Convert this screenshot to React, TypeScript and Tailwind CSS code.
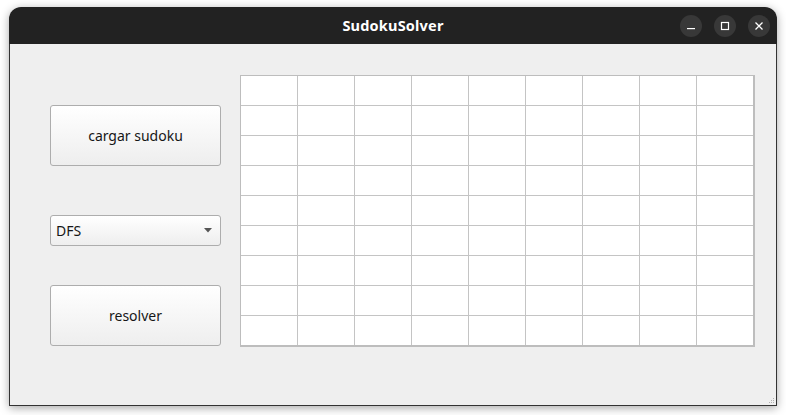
import React from 'react';

const rows = Array.from({ length: 9 });
const cols = Array.from({ length: 9 });

const TitleButton: React.FC<{ children: React.ReactNode }> = ({ children }) => (
  <div className="w-[22px] h-[22px] rounded-full bg-[#383838] flex items-center justify-center text-white">
    {children}
  </div>
);

const App: React.FC = () => {
  return (
    <div className="w-[786px] h-[415px] bg-white pl-[9px] pt-[7px] font-['Noto_Sans',sans-serif]">
      <div className="w-[768px] h-[399px] flex flex-col rounded-t-[12px] shadow-[0_2px_10px_rgba(0,0,0,0.35)]">
        <div className="h-[37px] bg-[#222222] rounded-t-[12px] flex items-center relative">
          <div className="flex-1 text-center text-white font-bold text-[14.5px] tracking-[0.2px]">SudokuSolver</div>
          <div className="absolute right-[7px] top-[8px] flex gap-[12px]">
            <TitleButton>
              <svg width="10" height="10" viewBox="0 0 10 10"><rect x="1" y="7" width="8" height="1.2" fill="white" /></svg>
            </TitleButton>
            <TitleButton>
              <svg width="10" height="10" viewBox="0 0 10 10"><rect x="1.5" y="1.5" width="7" height="7" fill="none" stroke="white" strokeWidth="1.2" /></svg>
            </TitleButton>
            <TitleButton>
              <svg width="10" height="10" viewBox="0 0 10 10"><path d="M1.5 1.5 L8.5 8.5 M8.5 1.5 L1.5 8.5" stroke="white" strokeWidth="1.3" /></svg>
            </TitleButton>
          </div>
        </div>
        <div className="flex-1 bg-[#efefef] border border-t-0 border-[#333333] flex relative">
          <div className="w-[212px] pl-[40px] pt-[61px] flex flex-col">
            <button className="w-[171px] h-[61px] rounded-[3px] border border-[#adadad] bg-gradient-to-b from-white to-[#eeeeee] text-[14px] text-[#161616]">
              cargar sudoku
            </button>
            <div className="mt-[49px] w-[171px] h-[31px] rounded-[3px] border border-[#adadad] bg-gradient-to-b from-white to-[#eeeeee] flex items-center justify-between pl-[5px] pr-[8px] text-[14px] text-[#161616]">
              <span>DFS</span>
              <svg width="8" height="5" viewBox="0 0 8 5"><path d="M0 0 L8 0 L4 4.5 Z" fill="#555" /></svg>
            </div>
            <button className="mt-[39px] w-[171px] h-[61px] rounded-[3px] border border-[#adadad] bg-gradient-to-b from-white to-[#eeeeee] text-[14px] text-[#161616]">
              resolver
            </button>
          </div>
          <div className="pt-[31px] pl-[18px]">
            <div className="border-l border-t border-r-2 border-b-2 border-[#bdbdbd] bg-[#c4c4c4] grid grid-cols-[repeat(9,56px)] grid-rows-[repeat(9,29px)] gap-[1px]">
              {rows.map((_, r) =>
                cols.map((_, c) => <div key={`${r}-${c}`} className="bg-white" />)
              )}
            </div>
          </div>
          <div className="absolute right-[2px] bottom-[2px] grid grid-cols-3 gap-[1px]">
            {[0, 0, 1, 0, 1, 1, 1, 1, 1].map((v, i) => (
              <div key={i} className={v ? 'w-[1px] h-[1px] bg-[#b0b0b0]' : 'w-[1px] h-[1px]'} />
            ))}
          </div>
        </div>
      </div>
    </div>
  );
};

export default App;
